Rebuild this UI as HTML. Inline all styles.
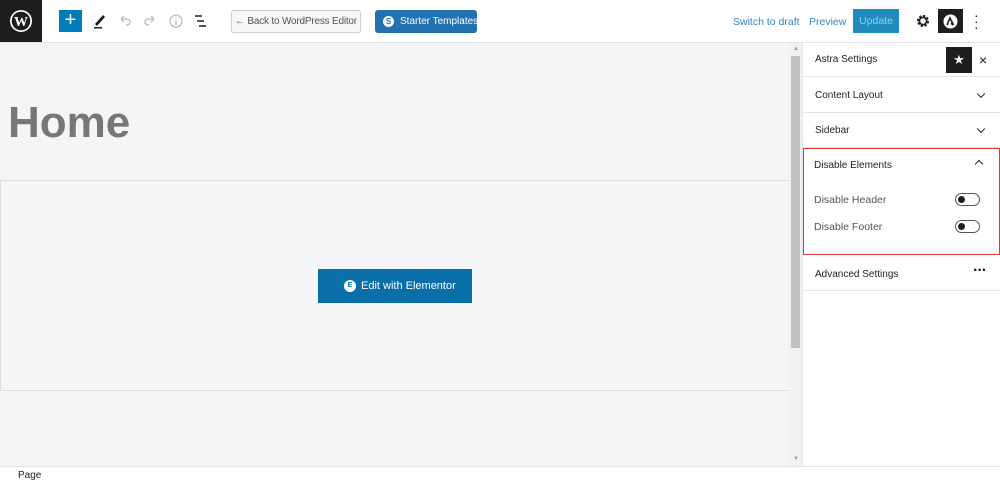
<!DOCTYPE html><html><head><style>
*{box-sizing:border-box;margin:0;padding:0}
body{width:1000px;height:484px;overflow:hidden;font-family:"Liberation Sans",sans-serif;background:#fff;position:relative;font-size:13px}
.a{position:absolute;white-space:nowrap}
.top{left:0;top:0;width:1000px;height:43px;background:#fff;border-bottom:1px solid #e2e4e7}
.wp{left:0;top:0;width:42px;height:42px;background:#1e1e1e}
.main{left:0;top:43px;width:789px;height:423px;background:#f4f5f7}
.sb{left:789px;top:43px;width:13px;height:423px;background:#f1f1f1}
.side{left:802px;top:43px;width:198px;height:423px;background:#fff;border-left:1px solid #e2e4e7}
.row{left:803px;width:197px;border-bottom:1px solid #e2e4e7;font-size:10px;color:#1e1e1e}
.chev{position:absolute;right:16px;top:50%;width:6px;height:6px;border-right:1.5px solid #1e1e1e;border-bottom:1.5px solid #1e1e1e;transform:translateY(-70%) rotate(45deg)}
.tog{position:absolute;width:25px;height:13px;border:1px solid #555;border-radius:7px}
.tog:after{content:"";position:absolute;left:2px;top:2px;width:7px;height:7px;border-radius:50%;background:#1e1e1e}
</style></head><body>
<div class="a top"></div>
<div class="a wp"><svg width="42" height="42"><circle cx="21" cy="21" r="11" fill="#fff"/><circle cx="21" cy="21" r="9.3" fill="#1e1e1e"/><text x="21" y="26" font-size="14" font-weight="bold" fill="#fff" text-anchor="middle" font-family="Liberation Serif">W</text></svg></div>
<div class="a" style="left:59px;top:10px;width:23px;height:22px;background:#007cba;color:#fff;font-size:20px;line-height:21px;text-align:center">+</div>
<svg class="a" style="left:92px;top:12px" width="16" height="18"><path d="M3 12 L11 3 L13 5 L5 14Z" fill="#1e1e1e"/><rect x="2" y="15" width="8" height="1.5" fill="#1e1e1e"/></svg>
<svg class="a" style="left:117px;top:12px" width="16" height="16"><path d="M4 7 H10 A3 3 0 0 1 10 13 H9 M4 7 L7 4 M4 7 L7 10" stroke="#bbb" stroke-width="1.3" fill="none"/></svg>
<svg class="a" style="left:142px;top:12px" width="16" height="16"><path d="M12 7 H6 A3 3 0 0 0 6 13 H7 M12 7 L9 4 M12 7 L9 10" stroke="#bbb" stroke-width="1.3" fill="none"/></svg>
<svg class="a" style="left:168px;top:13px" width="16" height="16"><circle cx="8" cy="8" r="6" stroke="#bbb" stroke-width="1.3" fill="none"/><path d="M8 7v5M8 4.5v1.3" stroke="#bbb" stroke-width="1.3"/></svg>
<svg class="a" style="left:193px;top:14px" width="16" height="14"><path d="M2 2h7M4 7h7M6 12h7" stroke="#1e1e1e" stroke-width="1.6"/></svg>
<div class="a" style="left:231px;top:10px;width:130px;height:23px;border:1px solid #ccc;border-radius:3px;background:#f6f7f7;color:#555;font-size:10px;line-height:21px;text-align:center;letter-spacing:-0.2px">← Back to WordPress Editor</div>
<div class="a" style="left:375px;top:10px;width:102px;height:23px;border-radius:3px;background:#2271b1;color:#fff;font-size:10px;line-height:23px;padding-left:25px">Starter Templates</div>
<div class="a" style="left:383px;top:16px;width:11px;height:11px;border-radius:50%;background:#fff;color:#2271b1;font-size:8px;font-weight:bold;text-align:center;line-height:11px">S</div>
<div class="a" style="left:733px;top:16px;color:#3582c4;font-size:10.5px">Switch to draft</div>
<div class="a" style="left:809px;top:16px;color:#3582c4;font-size:10.5px">Preview</div>
<div class="a" style="left:853px;top:9px;width:46px;height:24px;background:#1e8cbe;color:#9ccbe4;font-size:10.5px;line-height:24px;text-align:center">Update</div>
<svg class="a" style="left:916px;top:14px" width="14" height="14"><circle cx="7" cy="7" r="4.5" fill="none" stroke="#1e1e1e" stroke-width="3" stroke-dasharray="2.2 1.3"/><circle cx="7" cy="7" r="3.6" fill="none" stroke="#1e1e1e" stroke-width="1.6"/></svg>
<div class="a" style="left:938px;top:9px;width:25px;height:24px;background:#1e1e1e"></div>
<svg class="a" style="left:942px;top:13px" width="17" height="17"><circle cx="8.5" cy="8.5" r="7" fill="#fff"/><path d="M5 12 L8 5 L11.5 12 M9 10 L11 12" stroke="#1e1e1e" stroke-width="1.6" fill="none"/></svg>
<div class="a" style="left:974px;top:12px;font-size:14px;line-height:6px;color:#1e1e1e;width:4px">·<br>·<br>·</div>
<div class="a main"></div>
<div class="a" style="left:8px;top:98px;font-size:44px;font-weight:bold;color:#777">Home</div>
<div class="a" style="left:0;top:180px;width:790px;height:211px;border:1px solid #ddd"></div>
<div class="a" style="left:318px;top:269px;width:154px;height:34px;background:#0a6ea8;color:#fff;font-size:11px;line-height:34px;padding-left:43px">Edit with Elementor</div>
<div class="a" style="left:344px;top:280px;width:12px;height:12px;border-radius:50%;background:#fff;color:#0a6ea8;font-size:7px;font-weight:bold;text-align:center;line-height:12px">E</div>
<div class="a sb"></div>
<div class="a" style="left:791px;top:56px;width:9px;height:292px;background:#c1c1c1"></div>
<div class="a" style="left:793px;top:46px;font-size:6px;color:#999">▲</div>
<div class="a" style="left:793px;top:456px;font-size:6px;color:#999">▼</div>
<div class="a side"></div>
<div class="a row" style="top:43px;height:34px;line-height:34px;padding-left:12px">Astra Settings</div>
<div class="a" style="left:946px;top:47px;width:26px;height:26px;background:#1e1e1e;color:#fff;font-size:13px;text-align:center;line-height:26px">★</div>
<div class="a" style="left:979px;top:52px;font-size:14px;color:#1e1e1e">×</div>
<div class="a row" style="top:78px;height:35px;line-height:35px;padding-left:12px">Content Layout<span class="chev"></span></div>
<div class="a row" style="top:113px;height:35px;line-height:35px;padding-left:12px">Sidebar<span class="chev"></span></div>
<div class="a" style="left:803px;top:148px;width:197px;height:107px;border:1px solid #e0393e"></div>
<div class="a" style="left:814px;top:160px;font-size:10px;color:#1e1e1e">Disable Elements</div>
<div class="a" style="left:976px;top:161px;width:6px;height:6px;border-left:1.5px solid #1e1e1e;border-top:1.5px solid #1e1e1e;transform:rotate(45deg)"></div>
<div class="a" style="left:814px;top:194px;font-size:10.5px;color:#555">Disable Header</div>
<div class="tog" style="left:955px;top:193px"></div>
<div class="a" style="left:814px;top:221px;font-size:10.5px;color:#555">Disable Footer</div>
<div class="tog" style="left:955px;top:220px"></div>
<div class="a row" style="top:256px;height:35px;line-height:38px;padding-left:12px">Advanced Settings<span style="position:absolute;right:14px;top:-4px;font-size:16px;font-weight:bold;letter-spacing:-1px">···</span></div>
<div class="a" style="left:0;top:466px;width:1000px;height:18px;background:#fff;border-top:1px solid #e2e4e7"></div>
<div class="a" style="left:18px;top:470px;font-size:10px;color:#1e1e1e">Page</div>
</body></html>
